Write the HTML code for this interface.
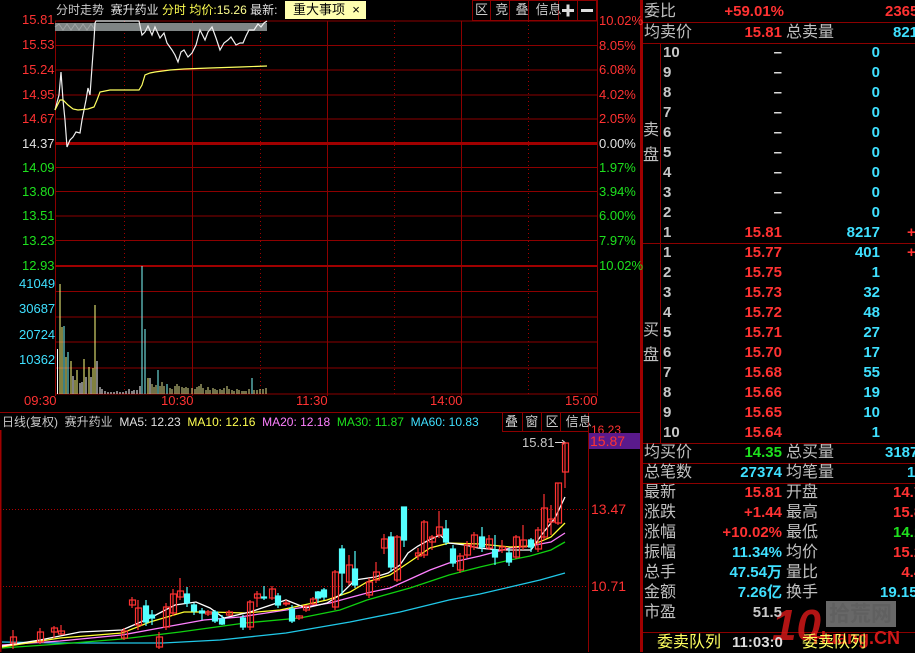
<!DOCTYPE html>
<html><head><meta charset="utf-8"><style>
*{margin:0;padding:0;box-sizing:border-box}
body{width:915px;height:652px;background:#000;overflow:hidden;position:relative;font-family:"Liberation Sans","Noto Sans CJK SC",sans-serif;font-size:13px;color:#c0c0c0}
.t{position:absolute;white-space:nowrap;line-height:16px}
.r{color:#ff3232}.g{color:#1ee11e}.c{color:#3fe0ff}.y{color:#ffff50}.w{color:#e0e0e0}.p{color:#ff80ff}
.rp{position:absolute;white-space:nowrap;font-size:15px;line-height:20px;font-weight:bold}
.lb{position:absolute;font-size:16px;line-height:20px;color:#c0c0c0}
.ra{text-align:right}
</style></head><body>
<svg width="915" height="652" style="position:absolute;left:0;top:0">
<g stroke="#8c0000" stroke-width="1">
<line x1="55" y1="21" x2="597" y2="21"/><line x1="55" y1="45.5" x2="597" y2="45.5"/><line x1="55" y1="70" x2="597" y2="70"/><line x1="55" y1="95" x2="597" y2="95"/><line x1="55" y1="119" x2="597" y2="119"/>
<line x1="55" y1="167.5" x2="597" y2="167.5"/><line x1="55" y1="191.5" x2="597" y2="191.5"/><line x1="55" y1="216" x2="597" y2="216"/><line x1="55" y1="240.5" x2="597" y2="240.5"/>
<line x1="55" y1="291.5" x2="597" y2="291.5"/><line x1="55" y1="317" x2="597" y2="317"/><line x1="55" y1="342" x2="597" y2="342"/><line x1="55" y1="368" x2="597" y2="368"/><line x1="55" y1="394" x2="597" y2="394"/>
<line x1="55.5" y1="21" x2="55.5" y2="396"/><line x1="192.5" y1="21" x2="192.5" y2="396"/><line x1="327.5" y1="21" x2="327.5" y2="396"/><line x1="461.5" y1="21" x2="461.5" y2="396"/><line x1="597.5" y1="0" x2="597.5" y2="396"/>
</g>
<g stroke="#a00000" stroke-width="3"><line x1="55" y1="143.5" x2="597" y2="143.5"/></g>
<g stroke="#a00000" stroke-width="2"><line x1="55" y1="266" x2="597" y2="266"/></g>
<g stroke="#a00000" stroke-dasharray="1,3"><line x1="124.5" y1="21" x2="124.5" y2="394"/><line x1="260.5" y1="21" x2="260.5" y2="394"/><line x1="394.5" y1="21" x2="394.5" y2="394"/><line x1="528.5" y1="21" x2="528.5" y2="394"/></g>
<g stroke="#8c0000" fill="none"><rect x="472.5" y="0.5" width="124" height="20"/><line x1="490.5" y1="0" x2="490.5" y2="21"/><line x1="509.5" y1="0" x2="509.5" y2="21"/><line x1="528.5" y1="0" x2="528.5" y2="21"/><line x1="558.5" y1="0" x2="558.5" y2="21"/><line x1="577.5" y1="0" x2="577.5" y2="21"/></g>
<rect x="562" y="9" width="12" height="3" fill="#ddd"/><rect x="566.5" y="4.5" width="3" height="12" fill="#ddd"/><rect x="581" y="9" width="12" height="3" fill="#ddd"/>
<rect x="285" y="1" width="81" height="18" fill="#ffffb0"/>
<path d="M55 23 L267 23 L267 31 L55 31 Z" fill="#7f8585"/>
<path d="M55 27 l4 -3 4 6 4 -6 4 6 4 -6 4 6 4 -6 4 6 4 -6 4 6" stroke="#a0a4a4" fill="none"/>
<polyline fill="none" stroke="#f0f0f0" stroke-width="1.2" points="55,110 59,95 61,72 63,100 65,120 67,147 70,140 73,137 76,132 80,133 82,120 84,110 86,100 88,88 90,95 92,67 94,40 95,23 96,21 139,21 142,35 145,32 148,26 152,35 155,27 160,38 164,33 167,43 172,50 175,55 178,62 181,52 184,50 188,57 192,53 196,45 200,30 205,40 208,32 212,27 216,38 220,50 224,43 228,40 231,37 236,45 240,43 243,43 246,36 249,30 254,30 258,24 261,27 264,23 267,21"/>
<polyline fill="none" stroke="#ffff60" stroke-width="1.2" points="55,110 60,100 63,100 68,105 73,109 78,110 88,109 94,107 97,100 100,92 110,90 139,90 142,85 145,75 150,73 155,72 170,70 184,69 210,68 240,67 267,66"/>
<g stroke-width="1">
<line x1="57.5" y1="394" x2="57.5" y2="349" stroke="#fff"/><line x1="60" y1="394" x2="60" y2="284" stroke="#ffff80"/><line x1="62" y1="394" x2="62" y2="327" stroke="#ffff80"/><line x1="64" y1="394" x2="64" y2="326" stroke="#80ffff"/><line x1="66" y1="394" x2="66" y2="357" stroke="#ffff80"/><line x1="68" y1="394" x2="68" y2="352" stroke="#80ffff"/><line x1="71" y1="394" x2="71" y2="361" stroke="#ffff80"/><line x1="73" y1="394" x2="73" y2="376" stroke="#fff"/><line x1="75" y1="394" x2="75" y2="380" stroke="#ffff80"/><line x1="77" y1="394" x2="77" y2="370" stroke="#ffff80"/><line x1="80" y1="394" x2="80" y2="383" stroke="#fff"/><line x1="82" y1="394" x2="82" y2="382" stroke="#fff"/><line x1="84" y1="394" x2="84" y2="359" stroke="#ffff80"/><line x1="86" y1="394" x2="86" y2="377" stroke="#fff"/><line x1="89" y1="394" x2="89" y2="367" stroke="#ffff80"/><line x1="91" y1="394" x2="91" y2="377" stroke="#fff"/><line x1="93" y1="394" x2="93" y2="368" stroke="#ffff80"/><line x1="95" y1="394" x2="95" y2="305" stroke="#ffff80"/><line x1="97" y1="394" x2="97" y2="361" stroke="#fff"/><line x1="100" y1="394" x2="100" y2="387" stroke="#fff"/><line x1="102" y1="394" x2="102" y2="389" stroke="#fff"/>
<path d="M105 394v-3M108 394v-2M111 394v-2M114 394v-2M117 394v-3M120 394v-2M123 394v-2M126 394v-3M129 394v-5M132 394v-3M134 394v-4M137 394v-4M140 394v-8" stroke="#fff"/>
<line x1="142" y1="394" x2="142" y2="266" stroke="#80ffff"/><line x1="145" y1="394" x2="145" y2="329" stroke="#80ffff"/><line x1="148" y1="394" x2="148" y2="378" stroke="#ffff80"/><line x1="150" y1="394" x2="150" y2="378" stroke="#fff"/><line x1="158" y1="394" x2="158" y2="370" stroke="#80ffff"/><line x1="167" y1="394" x2="167" y2="384" stroke="#80ffff"/>
<path d="M152 394v-10M154 394v-7M156 394v-9M160 394v-8M162 394v-12M164 394v-8M170 394v-6M172 394v-5M175 394v-8M177 394v-10M179 394v-8M182 394v-7M184 394v-6M186 394v-7M188 394v-6M192 394v-6M195 394v-5M197 394v-7M199 394v-8M201 394v-10M203 394v-6M206 394v-4M208 394v-7M210 394v-4M213 394v-6M215 394v-5M217 394v-4M220 394v-5M222 394v-4M224 394v-6M227 394v-8M229 394v-5M232 394v-4M234 394v-3M237 394v-5M239 394v-4M242 394v-3M244 394v-3M246 394v-3M249 394v-5M254 394v-4M257 394v-4M260 394v-5M263 394v-5M266 394v-6" stroke="#e0e090"/>
<line x1="252" y1="394" x2="252" y2="378" stroke="#80ffff"/>
</g>
<g stroke="#8c0000" fill="none">
<line x1="0" y1="412.5" x2="641" y2="412.5"/><line x1="0.5" y1="430" x2="0.5" y2="652" stroke="#a00000" stroke-width="2"/>
<line x1="588.5" y1="412" x2="588.5" y2="652"/>
<rect x="502.5" y="412.5" width="86" height="19"/><line x1="522.5" y1="412" x2="522.5" y2="431"/><line x1="541.5" y1="412" x2="541.5" y2="431"/><line x1="560.5" y1="412" x2="560.5" y2="431"/>
</g>
<g stroke="#b00000" stroke-dasharray="1,2"><line x1="0" y1="509.5" x2="588" y2="509.5"/><line x1="0" y1="586.5" x2="588" y2="586.5"/></g>
<rect x="589" y="433" width="52" height="16" fill="#5a1a8c"/>
<line x1="555" y1="442.5" x2="565" y2="442.5" stroke="#ddd"/><path d="M562 440l3 2.5-3 2.5" stroke="#ddd" fill="none"/>
<polyline fill="none" stroke="#20c8e8" stroke-width="1.3" points="2,642 60,643 163,643 220,640 286,633 350,622 400,612 449,600 480,594 510,587 540,580 565,573"/>
<polyline fill="none" stroke="#10d010" stroke-width="1.3" points="2,648 60,644 122,639 180,632 245,623 300,618 340,610 367,600 410,588 449,575 480,567 510,560 530,556 551,550 565,542"/>
<polyline fill="none" stroke="#ff80ff" stroke-width="1.3" points="2,645 60,641 122,635 160,628 204,620 240,617 286,610 330,603 367,593 390,588 408,580 430,570 449,563 480,556 510,548 530,546 551,542 565,533"/>
<polyline fill="none" stroke="#ffff30" stroke-width="1.3" points="2,647 60,638 122,633 150,622 184,612 210,612 245,613 280,610 327,600 350,592 367,582 390,575 408,563 430,548 449,543 480,544 510,547 530,546 551,537 565,523"/>
<polyline fill="none" stroke="#fff" stroke-width="1.3" points="2,646 40,640 80,632 122,630 150,618 175,605 196,602 210,608 224,618 250,612 286,600 306,608 327,603 340,595 355,580 375,577 388,573 400,565 408,553 418,546 429,540 440,535 449,543 465,545 478,548 500,550 531,550 543,533 555,518 565,497"/>
<g stroke="#ff3232" fill="none" stroke-width="1.2">
<path d="M13 630v19M40 628v16M54 626v12M61 625v10M124 628v12M132 597v11M138 600v30M159 632v17M166 603v27M173 589v27M180 578v22M208 610v6M229 610v6M250 600v30M257 591v16M272 586v14M286 600v6M299 615v5M306 605v7M313 597v8M335 570v40M349 555v30M369 578v20M376 562v21M384 534v20M397 535v47M418 548v12M424 520v38M432 535v15M439 511v27M460 553v20M467 541v17M474 532v18M489 535v15M502 540v13M516 535v24M523 525v25M538 527v25M544 494v46M551 505v30M558 483v42M565 443v45"/>
<rect x="10.5" y="637" width="6" height="6"/><rect x="37.5" y="632" width="6" height="10"/><rect x="51.5" y="628" width="6" height="4"/><rect x="58.5" y="631" width="6" height="3"/><rect x="121.5" y="631" width="6" height="7"/><rect x="129.5" y="600" width="6" height="5"/><rect x="135.5" y="608" width="6" height="17"/><rect x="156.5" y="637" width="6" height="10"/><rect x="163.5" y="607" width="6" height="20"/><rect x="170.5" y="594" width="6" height="19"/><rect x="177.5" y="591" width="6" height="6"/><rect x="205.5" y="612" width="6" height="2"/><rect x="226.5" y="612" width="6" height="3"/><rect x="247.5" y="602" width="6" height="25"/><rect x="254.5" y="594" width="6" height="4"/><rect x="269.5" y="589" width="6" height="9"/><rect x="283.5" y="603" width="6" height="1"/><rect x="296.5" y="616" width="6" height="2"/><rect x="303.5" y="606" width="6" height="4"/><rect x="310.5" y="599" width="6" height="5"/><rect x="332.5" y="572" width="6" height="35"/><rect x="346.5" y="565" width="6" height="17"/><rect x="366.5" y="582" width="6" height="13"/><rect x="373.5" y="572" width="6" height="8"/><rect x="381.5" y="539" width="6" height="9"/><rect x="394.5" y="537" width="6" height="43"/><rect x="415.5" y="553" width="6" height="3"/><rect x="421.5" y="522" width="6" height="33"/><rect x="429.5" y="537" width="6" height="5"/><rect x="436.5" y="527" width="6" height="8"/><rect x="457.5" y="556" width="6" height="14"/><rect x="464.5" y="545" width="6" height="10"/><rect x="471.5" y="535" width="6" height="12"/><rect x="486.5" y="539" width="6" height="9"/><rect x="499.5" y="547" width="6" height="3"/><rect x="513.5" y="537" width="6" height="20"/><rect x="520.5" y="540" width="6" height="7"/><rect x="535.5" y="530" width="6" height="19"/><rect x="541.5" y="508" width="6" height="29"/><rect x="548.5" y="519" width="6" height="3"/><rect x="555.5" y="483" width="6" height="40"/><rect x="562.5" y="443" width="6" height="29"/>
</g>
<g stroke="#54ffff" fill="#54ffff" stroke-width="1.2">
<path d="M146 600v26M152 610v15M187 587v20M194 603v12M202 608v12M215 610v13M222 615v10M243 615v15M264 586v14M278 593v15M292 605v18M318 591v12M324 588v12M342 545v50M355 551v37M391 532v40M404 507v40M446 520v25M453 545v22M482 527v25M495 535v30M509 548v18M531 538v14"/>
<rect x="143.5" y="606" width="5" height="16"/><rect x="149.5" y="615" width="5" height="3"/><rect x="184.5" y="594" width="5" height="9"/><rect x="191.5" y="605" width="5" height="6"/><rect x="199.5" y="611" width="5" height="2"/><rect x="212.5" y="612" width="5" height="9"/><rect x="219.5" y="619" width="5" height="5"/><rect x="240.5" y="618" width="5" height="9"/><rect x="261.5" y="597" width="5" height="1"/><rect x="275.5" y="596" width="5" height="9"/><rect x="289.5" y="609" width="5" height="12"/><rect x="315.5" y="592" width="5" height="6"/><rect x="321.5" y="590" width="5" height="7"/><rect x="339.5" y="549" width="5" height="24"/><rect x="352.5" y="569" width="5" height="16"/><rect x="388.5" y="537" width="5" height="30"/><rect x="401.5" y="507" width="5" height="33"/><rect x="443.5" y="529" width="5" height="13"/><rect x="450.5" y="549" width="5" height="14"/><rect x="479.5" y="537" width="5" height="10"/><rect x="492.5" y="550" width="5" height="7"/><rect x="506.5" y="553" width="5" height="9"/><rect x="528.5" y="540" width="5" height="7"/>
</g>
<g stroke="#8c0000">
<line x1="642" y1="22.5" x2="915" y2="22.5"/><line x1="642" y1="43.5" x2="915" y2="43.5"/><line x1="642" y1="243.5" x2="915" y2="243.5"/><line x1="642" y1="443.5" x2="915" y2="443.5"/><line x1="642" y1="463.5" x2="915" y2="463.5"/><line x1="642" y1="483.5" x2="915" y2="483.5"/><line x1="642" y1="632.5" x2="915" y2="632.5"/>
<line x1="660.5" y1="43" x2="660.5" y2="443"/>
</g>
<rect x="640" y="0" width="3" height="652" fill="#a00000"/>
<text x="772" y="640" font-family="Liberation Sans" font-weight="bold" font-size="44" fill="#d01818" fill-opacity="0.85" font-style="italic">10</text>
<rect x="826" y="601" width="70" height="26" fill="#d0d0d0" fill-opacity="0.5"/>
</svg>

<div class="t" style="left:56px;top:2px;color:#c8c8c8;font-size:12px">分时走势&nbsp;&nbsp;<span class="w">赛升药业</span>&nbsp;<span class="y">分时</span>&nbsp;<span class="y">均价:</span><span style="color:#ffff90">15.26</span>&nbsp;<span class="w">最新:</span></div>
<div class="t" style="left:293px;top:2px;color:#000">重大事项&nbsp;&nbsp;×</div>
<div class="t" style="left:475px;top:2px;color:#ccc;font-size:13px">区&nbsp;&nbsp;竞&nbsp;&nbsp;叠&nbsp;&nbsp;信息</div>
<div class="t r" style="left:22px;top:12px">15.81</div>
<div class="t r" style="left:22px;top:37px">15.53</div>
<div class="t r" style="left:22px;top:62px">15.24</div>
<div class="t r" style="left:22px;top:87px">14.95</div>
<div class="t r" style="left:22px;top:111px">14.67</div>
<div class="t w" style="left:22px;top:136px">14.37</div>
<div class="t g" style="left:22px;top:160px">14.09</div>
<div class="t g" style="left:22px;top:184px">13.80</div>
<div class="t g" style="left:22px;top:208px">13.51</div>
<div class="t g" style="left:22px;top:233px">13.23</div>
<div class="t g" style="left:22px;top:258px">12.93</div>
<div class="t c" style="left:19px;top:276px">41049</div>
<div class="t c" style="left:19px;top:301px">30687</div>
<div class="t c" style="left:19px;top:327px">20724</div>
<div class="t c" style="left:19px;top:352px">10362</div>
<div class="t r" style="left:24px;top:393px">09:30</div>
<div class="t r" style="left:161px;top:393px">10:30</div>
<div class="t r" style="left:296px;top:393px">11:30</div>
<div class="t r" style="left:430px;top:393px">14:00</div>
<div class="t r" style="left:565px;top:393px">15:00</div>
<div class="t r" style="left:599px;top:13px">10.02%</div>
<div class="t r" style="left:599px;top:38px">8.05%</div>
<div class="t r" style="left:599px;top:62px">6.08%</div>
<div class="t r" style="left:599px;top:87px">4.02%</div>
<div class="t r" style="left:599px;top:111px">2.05%</div>
<div class="t w" style="left:599px;top:136px">0.00%</div>
<div class="t g" style="left:599px;top:160px">1.97%</div>
<div class="t g" style="left:599px;top:184px">3.94%</div>
<div class="t g" style="left:599px;top:208px">6.00%</div>
<div class="t g" style="left:599px;top:233px">7.97%</div>
<div class="t g" style="left:599px;top:258px">10.02%</div>
<div class="t" style="left:2px;top:414px;font-size:12px"><span style="color:#c8c8c8">日线(复权)&nbsp;&nbsp;赛升药业</span>&nbsp;&nbsp;<span class="w">MA5: 12.23</span>&nbsp;&nbsp;<span class="y">MA10: 12.16</span>&nbsp;&nbsp;<span class="p">MA20: 12.18</span>&nbsp;&nbsp;<span class="g">MA30: 11.87</span>&nbsp;&nbsp;<span class="c">MA60: 10.83</span></div>
<div class="t" style="left:505px;top:414px;color:#ccc">叠&nbsp;&nbsp;窗&nbsp;&nbsp;区&nbsp;&nbsp;信息</div>
<div class="t r" style="left:591px;top:425px;font-size:12px;line-height:10px;height:8px;overflow:hidden">16.23</div>
<div class="t r" style="left:590px;top:433px;font-size:14px">15.87</div>
<div class="t" style="left:522px;top:435px;color:#c8c8c8">15.81</div>
<div class="t r" style="left:591px;top:501px;font-size:14px">13.47</div>
<div class="t r" style="left:591px;top:578px;font-size:14px">10.71</div>

<div class="lb" style="left:644px;top:2px">委比</div>
<div class="rp r ra" style="left:700px;width:84px;top:2px">+59.01%</div>
<div class="rp r" style="left:885px;top:2px">2365</div>
<div class="lb" style="left:644px;top:23px">均卖价</div>
<div class="rp r ra" style="left:700px;width:82px;top:23px">15.81</div>
<div class="lb" style="left:786px;top:23px">总卖量</div>
<div class="rp c" style="left:893px;top:23px">821</div>
<div class="lb" style="left:643px;top:118px;width:18px;line-height:25px">卖<br>盘</div>
<div class="lb" style="left:643px;top:318px;width:18px;line-height:25px">买<br>盘</div>
<div class="rp" style="left:663px;top:43px;color:#c8c8c8;line-height:20px">10<br>9<br>8<br>7<br>6<br>5<br>4<br>3<br>2<br>1<br>1<br>2<br>3<br>4<br>5<br>6<br>7<br>8<br>9<br>10</div>
<div class="rp ra" style="left:700px;width:82px;top:43px;color:#ddd">–<br>–<br>–<br>–<br>–<br>–<br>–<br>–<br>–<br><span class="r">15.81</span><br><span class="r">15.77<br>15.75<br>15.73<br>15.72<br>15.71<br>15.70<br>15.68<br>15.66<br>15.65<br>15.64</span></div>
<div class="rp c ra" style="left:800px;width:80px;top:43px">0<br>0<br>0<br>0<br>0<br>0<br>0<br>0<br>0<br>8217<br>401<br>1<br>32<br>48<br>27<br>17<br>55<br>19<br>10<br>1</div>
<div class="rp r" style="left:907px;top:223px">+<br>+</div>
<div class="lb" style="left:644px;top:443px">均买价</div>
<div class="rp g ra" style="left:700px;width:82px;top:443px">14.35</div>
<div class="lb" style="left:786px;top:443px">总买量</div>
<div class="rp c" style="left:885px;top:443px">3187</div>
<div class="lb" style="left:644px;top:463px">总笔数</div>
<div class="rp c ra" style="left:700px;width:82px;top:463px">27374</div>
<div class="lb" style="left:786px;top:463px">均笔量</div>
<div class="rp c" style="left:907px;top:463px">1</div>
<div class="lb" style="left:644px;top:483px;line-height:20px">最新<br>涨跌<br>涨幅<br>振幅<br>总手<br>金额<br>市盈</div>
<div class="rp ra" style="left:680px;width:102px;top:483px"><span class="r">15.81</span><br><span class="r">+1.44</span><br><span class="r">+10.02%</span><br><span class="c">11.34%</span><br><span class="c">47.54万</span><br><span class="c">7.26亿</span><br><span style="color:#c8c8c8">51.5</span></div>
<div class="lb" style="left:786px;top:483px;line-height:20px">开盘<br>最高<br>最低<br>均价<br>量比<br>换手</div>
<div class="rp" style="left:893px;top:483px;line-height:20px"><span class="r">14.7</span><br><span class="r">15.8</span><br><span class="g">14.1</span><br><span class="r">15.2</span><br><span class="r">&nbsp;&nbsp;4.4</span></div>
<div class="rp c" style="left:880px;top:583px">19.15</div>
<div class="t" style="left:829px;top:603px;font-size:21px;line-height:24px;color:#606060;font-weight:bold">拾荒网</div>
<div class="t" style="left:813px;top:628px;font-size:18px;line-height:20px;color:#d01818;font-weight:bold">Huang.CN</div>
<div class="lb y" style="left:657px;top:633px;color:#ffff60">委卖队列</div>
<div class="rp" style="left:732px;top:633px;color:#ddd">11:03:0</div>
<div class="lb" style="left:802px;top:633px;color:#ffff60">委卖队列</div>
</body></html>
